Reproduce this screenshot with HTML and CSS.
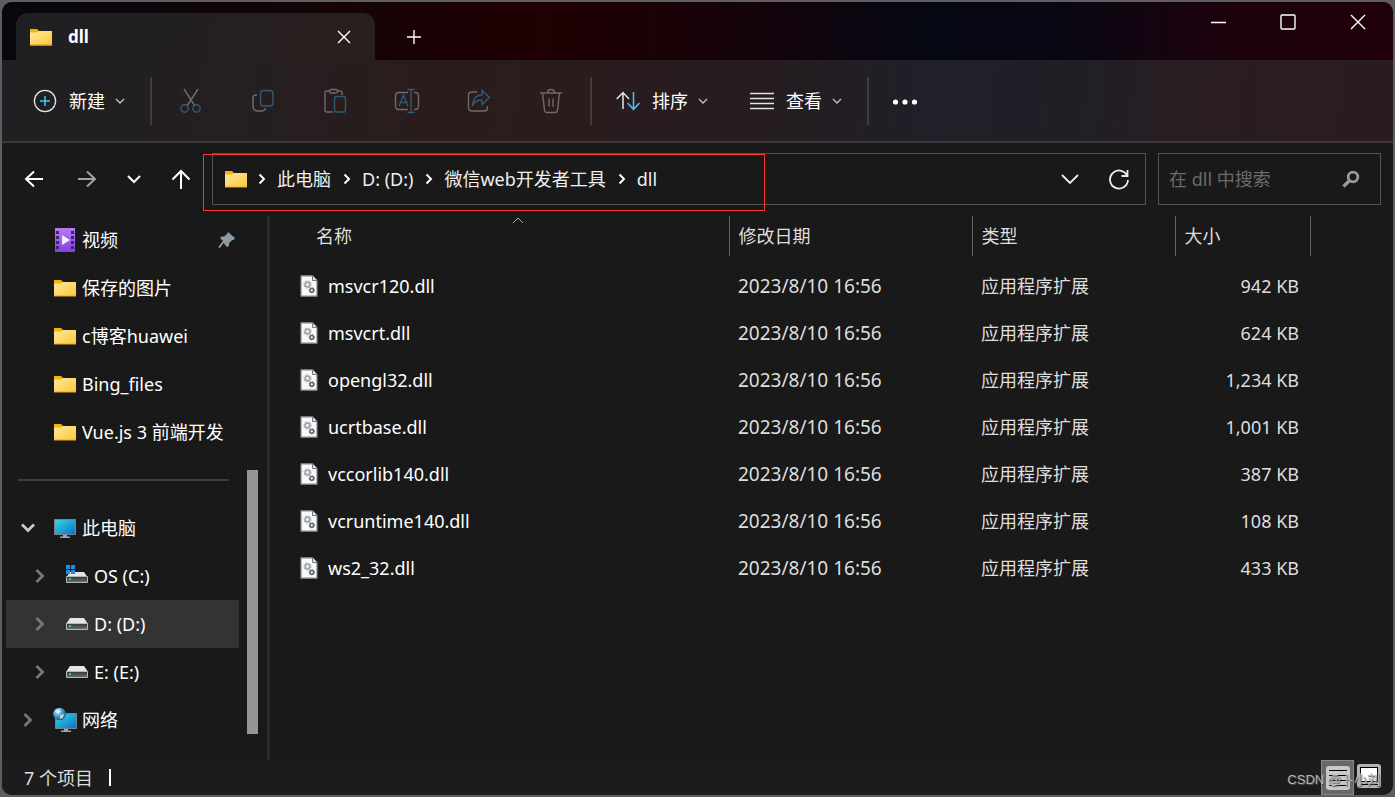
FILE: index.html
```html
<!DOCTYPE html>
<html lang="zh-CN">
<head>
<meta charset="utf-8">
<title>dll</title>
<link rel="stylesheet" href="styles.css">
</head>
<body>
<svg class="defs" aria-hidden="true">
  <defs>
    <linearGradient id="gFolder" x1="0" y1="0" x2="1" y2="1"><stop offset="0" stop-color="#ffe9a3"/><stop offset="1" stop-color="#fcc733"/></linearGradient>
    <linearGradient id="gScreen" x1="0" y1="0" x2="1" y2="1"><stop offset="0" stop-color="#35dbe2"/><stop offset="1" stop-color="#0b6fc4"/></linearGradient>
    <linearGradient id="gVideo" x1="0" y1="0" x2="0" y2="1"><stop offset="0" stop-color="#b97af5"/><stop offset="1" stop-color="#8440de"/></linearGradient>
    <linearGradient id="gDrive" x1="0" y1="0" x2="0" y2="1"><stop offset="0" stop-color="#333"/><stop offset="1" stop-color="#707070"/></linearGradient>
    <radialGradient id="gGlobe" cx=".35" cy=".3" r=".75"><stop offset="0" stop-color="#c9ecfb"/><stop offset=".5" stop-color="#4a9ccb"/><stop offset="1" stop-color="#17567f"/></radialGradient>
    <symbol id="folder" viewBox="0 0 24 18"><path d="M1 1h7l2 2v3H1z" fill="#f9b10c"/><path d="M1 4.500h7l2-1.500h13v14H1z" fill="url(#gFolder)"/><path d="M1 17h22" stroke="#e8aa26"/></symbol>
    <symbol id="chev-r" viewBox="0 0 8 12"><path d="M1.500 1.500 6 6l-4.500 4.500" fill="none" stroke="currentColor" stroke-width="2"/></symbol>
    <symbol id="chev-d" viewBox="0 0 10 6"><path d="M1 1l4 4 4-4" fill="none" stroke="currentColor" stroke-width="1.300"/></symbol>
    <symbol id="tree-r" viewBox="0 0 10 16"><path d="M1.500 2 7.500 8l-6 6" fill="none" stroke="currentColor" stroke-width="2.800"/></symbol>
    <symbol id="tree-d" viewBox="0 0 16 10"><path d="M2 1.500 8 7.500l6-6" fill="none" stroke="currentColor" stroke-width="2.800"/></symbol>
    <symbol id="drive" viewBox="0 0 24 14"><path d="M5 1h14l4 6H1z" fill="#e3e5e8"/><path d="M1.500 6.500h21v6h-21z" fill="url(#gDrive)" stroke="#b5b8bb"/><path d="M4 8h2v2H4z" fill="#29e04b"/></symbol>
    <symbol id="monitor" viewBox="0 0 24 20"><path d="M1.500 1.500h21v15h-21z" fill="url(#gScreen)" stroke="#76838c"/><path d="M10 17h4v1.500h3V20H7v-1.500h3z" fill="#9ba7af"/></symbol>
    <symbol id="file" viewBox="0 0 18 22"><path d="M1 .8h11.500L17 5.500V21.200H1z" fill="#f9f9f9" stroke="#858585" stroke-width="1.200"/><path d="M12.500 1v4.500H17" fill="#e4e4e4" stroke="#777"/><circle cx="7.500" cy="9.500" r="2.300" fill="none" stroke="#a0a9b2" stroke-width="1.800"/><circle cx="7.500" cy="9.500" r="3.500" fill="none" stroke="#a0a9b2" stroke-width="1.200" stroke-dasharray="1.370 1.370"/><circle cx="11.800" cy="15.300" r="1.900" fill="none" stroke="#59656d" stroke-width="1.500"/><circle cx="11.800" cy="15.300" r="2.700" fill="none" stroke="#59656d" stroke-width=".8" stroke-dasharray="1.060 1.060"/></symbol>
  </defs>
</svg>
<div class="window">
  <header class="titlebar">
    <div class="tab">
      <svg class="i-folder"><use href="#folder"/></svg>
      <span class="tab-title">dll</span>
      <button class="tab-close" aria-label="关闭标签页"><svg width="14" height="14" viewBox="0 0 14 14"><path d="M1 1l12 12M13 1 1 13"/></svg></button>
    </div>
    <button class="new-tab" aria-label="新建标签页"><svg width="16" height="16" viewBox="0 0 16 16"><path d="M8 1v14M1 8h14"/></svg></button>
    <div class="controls">
      <button aria-label="最小化"><svg width="16" height="16" viewBox="0 0 16 16"><path d="M1 8.500h15"/></svg></button>
      <button aria-label="最大化"><svg width="16" height="16" viewBox="0 0 16 16"><rect x="1" y="1" width="14" height="14" rx="1"/></svg></button>
      <button aria-label="关闭"><svg width="16" height="16" viewBox="0 0 16 16"><path d="M1 1l14 14M15 1 1 15"/></svg></button>
    </div>
  </header>
  <div class="toolbar">
    <button class="menu new"><svg width="24" height="24" viewBox="0 0 24 24"><circle cx="12" cy="12" r="10.600" stroke="#e4e4e4" stroke-width="1.300"/><path d="M12 7v10M7 12h10" stroke="#4cc2ff" stroke-width="1.500"/></svg><span>新建</span><svg class="i-chev"><use href="#chev-d"/></svg></button>
    <div class="rule"></div>
    <div class="actions">
      <button disabled aria-label="剪切"><svg width="24" height="26" viewBox="0 0 24 26"><path d="M5 1l11 17M19 1 8 18" stroke="#73696a"/><circle cx="5.500" cy="20.500" r="3.700" stroke="#315c77"/><circle cx="17.500" cy="20.500" r="3.700" stroke="#315c77"/></svg></button>
      <button disabled aria-label="复制"><svg width="24" height="26" viewBox="0 0 24 26"><path d="M6 7H5q-3 0-3 3v8q0 5 5 5h4q3 0 3.500-3" stroke="#73696a"/><rect x="9.500" y="2.500" width="12.500" height="15.500" rx="3" stroke="#315c77"/></svg></button>
      <button disabled aria-label="粘贴"><svg width="24" height="26" viewBox="0 0 24 26"><path d="M6.500 3H4Q2 3 2 5v17q0 2 2 2h6M15 3h2q2 0 2 2v2" stroke="#73696a"/><rect x="6.500" y="1.500" width="8" height="3.500" rx="1.700" stroke="#73696a"/><rect x="11.500" y="8.500" width="11" height="15.500" rx="1.500" stroke="#315c77"/></svg></button>
      <button disabled aria-label="重命名"><svg width="26" height="26" viewBox="0 0 26 26"><path d="M14 4.500H5Q1.500 4.500 1.500 8v10q0 3.500 3.500 3.500h9M20 4.500h1q3.500 0 3.500 3.500v10q0 3.500-3.500 3.500h-1" stroke="#73696a"/><path d="M17 2v22M13.500 1.500h7M13.500 24.500h7M5 18l4.500-11L14 18M6.500 14.500h6" stroke="#315c77"/></svg></button>
      <button disabled aria-label="共享"><svg width="26" height="26" viewBox="0 0 26 26"><path d="M11 4H6Q2.500 4 2.500 7.500v12Q2.500 23 6 23h12q3.500 0 3.500-3.500V18" stroke="#73696a"/><path d="M16 2.500l7.500 7-7.500 7v-4.500q-6-.5-9.500 5Q7 7.500 16 7z" stroke="#315c77"/></svg></button>
      <button disabled aria-label="删除"><svg width="24" height="26" viewBox="0 0 24 26"><path d="M1 5h22M8.500 5q0-3.500 3.500-3.500T15.500 5M3.500 5l2 17q.3 2.500 2.500 2.500h8q2.200 0 2.500-2.500l2-17M10 10.500v8M14 10.500v8" stroke="#73696a"/></svg></button>
    </div>
    <div class="rule"></div>
    <button class="menu sort"><svg width="24" height="20" viewBox="0 0 24 20"><path d="M7 18V1.500M.7 8 7 1.500 13 8" stroke="#e4e4e4" stroke-width="1.500"/><path d="M17.500 1v17M11.500 12l6 6.300 6-6.300" stroke="#4cc2ff" stroke-width="1.500"/></svg><span>排序</span><svg class="i-chev"><use href="#chev-d"/></svg></button>
    <button class="menu view"><svg width="24" height="18" viewBox="0 0 24 18"><path d="M0 1.500h24M0 6.500h24M0 11.500h24M0 16.500h24" stroke="#e4e4e4" stroke-width="1.400"/></svg><span>查看</span><svg class="i-chev"><use href="#chev-d"/></svg></button>
    <div class="rule"></div>
    <button class="more" aria-label="更多"><svg width="26" height="8" viewBox="0 0 26 8"><g fill="#fff"><circle cx="3.500" cy="5" r="2.600"/><circle cx="13" cy="5" r="2.600"/><circle cx="22.500" cy="5" r="2.600"/></g></svg></button>
  </div>
  <div class="locationbar">
    <nav class="history">
      <button aria-label="后退"><svg width="20" height="20" viewBox="0 0 20 20"><path d="M19 10H2M10 2.500 2 10l8 7.500"/></svg></button>
      <button class="dim" aria-label="前进"><svg width="20" height="20" viewBox="0 0 20 20"><path d="M1 10h17M10 2.500l8 7.500-8 7.500"/></svg></button>
      <button class="recent" aria-label="最近的位置"><svg width="14" height="10" viewBox="0 0 14 10"><path d="M1 2l6 6 6-6"/></svg></button>
      <button aria-label="向上"><svg width="20" height="22" viewBox="0 0 20 22"><path d="M10 21V3M1.500 11.500 10 3l8.500 8.500"/></svg></button>
    </nav>
    <div class="address">
      <svg class="i-folder"><use href="#folder"/></svg>
      <svg class="i-sep"><use href="#chev-r"/></svg><a href="#">此电脑</a>
      <svg class="i-sep"><use href="#chev-r"/></svg><a href="#">D: (D:)</a>
      <svg class="i-sep"><use href="#chev-r"/></svg><a href="#">微信web开发者工具</a>
      <svg class="i-sep"><use href="#chev-r"/></svg><a href="#">dll</a>
      <div class="address-tools">
        <button aria-label="以前的位置"><svg width="18" height="12" viewBox="0 0 18 12"><path d="M1 2l8 8 8-8"/></svg></button>
        <button aria-label="刷新"><svg width="22" height="22" viewBox="0 0 22 22"><path d="M19.500 8.500A9 9 0 1 0 20 12M19.500 2v6h-6"/></svg></button>
      </div>
      <div class="highlight"></div>
    </div>
    <label class="search"><input type="text" placeholder="在 dll 中搜索" aria-label="在 dll 中搜索"><svg width="18" height="18" viewBox="0 0 18 18"><circle cx="11" cy="7" r="4.800" stroke-width="2.800"/><path d="M7.500 10.500 1.500 16.500" stroke-width="3.200"/></svg></label>
  </div>
  <main class="body">
    <nav class="tree">
      <ul>
        <li><svg class="i-node" viewBox="0 0 24 26"><path d="M2 1h20v24H2z" fill="url(#gVideo)"/><path d="M3 4h3v3H3zM3 9h3v3H3zM3 14h3v3H3zM3 19h3v3H3zM18 4h3v3h-3zM18 9h3v3h-3zM18 14h3v3h-3zM18 19h3v3h-3z" fill="#40256b"/><path d="M9 8l8 5-8 5z" fill="#f4eeff"/></svg><a href="#">视频</a><svg class="pin" width="18" height="18" viewBox="0 0 18 18"><path d="M10 1l7 6-1.500 2-1.500.2-3 3V15l-2 1-3.500-4L2 17l-1.500-.5L1 15l4-5-3-3 1.500-1.500H6L9 3z" fill="#8e9aa3"/></svg></li>
        <li><svg class="i-folder"><use href="#folder"/></svg><a href="#">保存的图片</a></li>
        <li><svg class="i-folder"><use href="#folder"/></svg><a href="#">c博客huawei</a></li>
        <li><svg class="i-folder"><use href="#folder"/></svg><a href="#">Bing_files</a></li>
        <li><svg class="i-folder"><use href="#folder"/></svg><a href="#">Vue.js 3 前端开发</a></li>
        <li class="divider" role="separator"></li>
        <li class="root"><svg class="i-tree open"><use href="#tree-d"/></svg><svg class="i-monitor"><use href="#monitor"/></svg><a href="#">此电脑</a></li>
        <li class="child"><svg class="i-tree"><use href="#tree-r"/></svg><svg class="i-os" viewBox="0 0 24 24"><path d="M5 8h14l4 6H1z" fill="#e3e5e8"/><path d="M1.500 12.500h21v6h-21z" fill="url(#gDrive)" stroke="#b5b8bb"/><path d="M4 14h2v2H4z" fill="#29e04b"/><path d="M1 1h4v4H1zM6 1h4v4H6zM1 6h4v4H1zM6 6h4v4H6z" fill="#1790e8"/></svg><a href="#">OS (C:)</a></li>
        <li class="child selected"><svg class="i-tree"><use href="#tree-r"/></svg><svg class="i-drive"><use href="#drive"/></svg><a href="#">D: (D:)</a></li>
        <li class="child"><svg class="i-tree"><use href="#tree-r"/></svg><svg class="i-drive"><use href="#drive"/></svg><a href="#">E: (E:)</a></li>
        <li class="root"><svg class="i-tree"><use href="#tree-r"/></svg><svg class="i-node" viewBox="0 0 24 26"><path d="M2.500 6.500h21v15h-21z" fill="url(#gScreen)" stroke="#76838c"/><path d="M11 22h4v1.500h3V25H8v-1.500h3z" fill="#9ba7af"/><circle cx="6.500" cy="7" r="6.300" fill="url(#gGlobe)"/><path d="M2 4l4-2 2 2-3 3zM7 8l4-1-1 4-3 1z" fill="#e1f3fa" opacity=".7"/></svg><a href="#">网络</a></li>
      </ul>
      <div class="scroll"><div class="thumb"></div></div>
    </nav>
    <section class="files">
      <table>
        <colgroup><col class="c-name"><col class="c-date"><col class="c-type"><col class="c-size"><col></colgroup>
        <thead><tr><th class="name">名称<svg class="sorted" width="12" height="7" viewBox="0 0 12 7"><path d="M1 6l5-5 5 5"/></svg></th><th>修改日期</th><th>类型</th><th>大小</th><th></th></tr></thead>
        <tbody>
          <tr><td><div class="file"><svg><use href="#file"/></svg>msvcr120.dll</div></td><td class="date">2023/8/10 16:56</td><td>应用程序扩展</td><td class="size">942 KB</td><td></td></tr>
          <tr><td><div class="file"><svg><use href="#file"/></svg>msvcrt.dll</div></td><td class="date">2023/8/10 16:56</td><td>应用程序扩展</td><td class="size">624 KB</td><td></td></tr>
          <tr><td><div class="file"><svg><use href="#file"/></svg>opengl32.dll</div></td><td class="date">2023/8/10 16:56</td><td>应用程序扩展</td><td class="size">1,234 KB</td><td></td></tr>
          <tr><td><div class="file"><svg><use href="#file"/></svg>ucrtbase.dll</div></td><td class="date">2023/8/10 16:56</td><td>应用程序扩展</td><td class="size">1,001 KB</td><td></td></tr>
          <tr><td><div class="file"><svg><use href="#file"/></svg>vccorlib140.dll</div></td><td class="date">2023/8/10 16:56</td><td>应用程序扩展</td><td class="size">387 KB</td><td></td></tr>
          <tr><td><div class="file"><svg><use href="#file"/></svg>vcruntime140.dll</div></td><td class="date">2023/8/10 16:56</td><td>应用程序扩展</td><td class="size">108 KB</td><td></td></tr>
          <tr><td><div class="file"><svg><use href="#file"/></svg>ws2_32.dll</div></td><td class="date">2023/8/10 16:56</td><td>应用程序扩展</td><td class="size">433 KB</td><td></td></tr>
        </tbody>
      </table>
    </section>
  </main>
  <footer class="status">
    <span class="count">7 个项目</span><i class="bar"></i>
    <div class="modes">
      <button class="on" aria-label="详细信息"><svg width="24" height="24" viewBox="0 0 24 24"><rect width="24" height="24" rx="3" fill="#c8c8c8"/><path d="M3 4.500h18M3 9.500h18M3 14.500h18M3 19.500h18" stroke="#000"/></svg></button>
      <button class="large" aria-label="大图标"><svg width="24" height="24" viewBox="0 0 24 24"><rect width="24" height="24" rx="3" fill="#b5b5b5"/><rect x="3.500" y="3.500" width="17" height="14" fill="#fff" stroke="#000"/><path d="M3 20.500h18" stroke="#000"/></svg></button>
    </div>
    <span class="watermark">CSDN @卜小刘</span>
  </footer>
</div>
</body>
</html>
```
FILE: styles.css
```css
* { box-sizing: border-box; }

html, body { height: 100%; }

body {
  margin: 0;
  padding: 2px;
  background: #5e5e5e;
  color: #fff;
  font: 18px/24px "Noto Sans", "Noto Sans CJK SC", sans-serif;
}

button {
  display: flex;
  align-items: center;
  justify-content: center;
  padding: 0;
  border: 0;
  background: none;
  color: inherit;
  font: inherit;
}

a { color: inherit; text-decoration: none; }
svg { display: block; flex: none; fill: none; }

.defs { position: absolute; width: 0; height: 0; }
.i-folder { width: 24px; height: 18px; }
.i-chev { width: 10px; height: 6px; color: #c4c4c4; }
.i-sep { width: 8px; height: 12px; }
.i-node { width: 24px; height: 26px; }
.i-monitor { width: 24px; height: 20px; }
.i-os { width: 24px; height: 24px; }
.i-drive { width: 24px; height: 14px; }

.window {
  display: flex;
  flex-direction: column;
  height: 100%;
  overflow: hidden;
  border-radius: 10px;
  background: #191919;
}

/* Title bar */
.titlebar {
  display: flex;
  align-items: flex-end;
  height: 58px;
  padding-left: 14px;
  background: linear-gradient(90deg, #08070f, #150406 25%, #200003 38%, #1b0205 46%, #10040e 58%, #050813 67%, #0a0713 77%, #1c020d 88%, #20000a);
}

.tab {
  display: flex;
  align-items: center;
  width: 359px;
  height: 47px;
  padding: 0 24px 0 13px;
  border-radius: 12px 12px 0 0;
  background: linear-gradient(100deg, #201f23, #231f20 50%, #2a1e1e);
}

.tab-title { margin-left: 15px; font-weight: 700; font-size: 17px; }
.tab-close { width: 14px; height: 24px; margin-left: auto; }
.new-tab { width: 78px; height: 47px; }
.titlebar svg { stroke: #fff; stroke-width: 1.4; }
.titlebar .i-folder { stroke: none; }

.controls { display: flex; align-self: flex-start; margin-left: auto; }
.controls button { width: 70px; height: 40px; }

/* Command bar */
.toolbar {
  display: flex;
  align-items: center;
  height: 83px;
  border-bottom: 2px solid #3b393a;
  background: linear-gradient(95deg, #201f23, #241f20 16%, #2b1c1c 32%, #2a1c1e 44%, #251d21 56%, #1f2029 67%, #211f26 77%, #291d22 86%, #2b1b20);
}

.rule { width: 2px; height: 48px; background: #413c3e; }
.menu span { margin: 0 10px 0 12px; }
.menu.new { margin: 0 25px 0 31px; }
.actions { display: flex; padding: 0 3px; }
.actions button { width: 72px; height: 48px; }
.actions svg { stroke-width: 1.4; }
.menu.sort { margin-left: 24px; }
.menu.view { margin: 0 25px 0 42px; }
.more { margin-left: 23px; }

/* Navigation and address */
.locationbar {
  display: flex;
  align-items: center;
  height: 73px;
  padding: 0 12px 2px 22px;
}

.history { display: flex; align-items: center; gap: 33px; margin-right: 21px; }
.history svg { stroke: #fff; stroke-width: 2; }
.history .recent { margin: 0 -3px; }
.history .dim { opacity: 0.6; }

.address {
  position: relative;
  display: flex;
  align-items: center;
  flex: 1;
  height: 52px;
  padding: 0 15px 0 11px;
  border: 1px solid #535353;
}

.address svg { stroke: none; }
.address a { margin-left: 11px; color: #f0f0f0; }
.address .i-sep { margin-left: 10px; }
.address a + .i-sep { margin-left: 12px; }
.address-tools { display: flex; gap: 29px; margin-left: auto; }
.address-tools svg { stroke: #f0f0f0; stroke-width: 1.8; }

.highlight {
  position: absolute;
  top: 0;
  left: -10px;
  width: 562px;
  height: 57px;
  border: 1px solid #f33;
}

.search {
  display: flex;
  align-items: center;
  width: 223px;
  height: 52px;
  margin-left: 12px;
  padding: 0 20px 0 10px;
  border: 1px solid #535353;
}

.search input {
  flex: 1;
  min-width: 0;
  padding: 0;
  border: 0;
  outline: 0;
  background: none;
  color: #fff;
  font: inherit;
}

.search input::placeholder { color: #6b6b6b; opacity: 1; }
.search svg { stroke: #999; }

/* Folder tree */
.body { display: flex; flex: 1; min-height: 0; }

.tree {
  display: flex;
  justify-content: space-between;
  width: 268px;
  border-right: 3px solid #2b2b2b;
}

.tree ul { width: 237px; margin: 0; padding: 0 0 0 4px; list-style: none; }

.tree li {
  display: flex;
  align-items: center;
  height: 48px;
  padding-left: 47px;
  white-space: nowrap;
}

.tree a { margin-left: 5px; }
.tree .pin { margin: 0 3px 0 auto; }
.tree .root { padding-left: 14px; }
.tree .child { padding-left: 26px; }
.tree .selected { background: #333; }

.tree .divider { padding: 0 10px 0 12px; }
.divider::before { content: ""; flex: 1; height: 2px; background: #3b3b3b; }

.i-tree { width: 10px; height: 16px; margin: 0 20px 0 3px; color: #777; }
.i-tree.open { width: 16px; height: 10px; margin: 0 17px 0 0; color: #c8c8c8; }

.scroll { display: flex; align-items: flex-end; padding: 0 9px 26px 0; }
.thumb { width: 11px; height: 264px; background: #959595; }

/* File list */
.files { flex: 1; min-width: 0; }
.files table { width: 100%; border-collapse: collapse; table-layout: fixed; }
.c-name { width: 459px; }
.c-date { width: 243px; }
.c-type { width: 203px; }
.c-size { width: 135px; }

.files th {
  height: 40px;
  padding: 0 9px;
  border-right: 1px solid #636363;
  color: #dedede;
  font-weight: 400;
  text-align: left;
}

.files th:last-child { border: 0; }
.files .name { position: relative; padding-left: 46px; }
.sorted { position: absolute; top: 1px; left: 242px; stroke: #aaa; }
.files tbody::before { content: ""; display: block; height: 6px; }
.files td { height: 47px; padding: 0 9px; color: #dedede; white-space: nowrap; }
.files .date { font-size: 19px; }
.files .size { padding-right: 11px; text-align: right; }
.file { display: flex; align-items: center; gap: 10px; padding-left: 21px; color: #fff; }
.file svg { width: 18px; height: 22px; }

/* Status bar */
.status {
  position: relative;
  display: flex;
  align-items: center;
  height: 35px;
  padding: 0 9px 0 22px;
  background: #1c1c1c;
}

.count { color: #dedede; }
.bar { width: 2px; height: 17px; margin-left: 16px; background: #fff; }
.modes { display: flex; align-self: stretch; margin-left: auto; }
.modes button { width: 30px; }
.modes .on { width: 33px; border: 1px solid #888; background: #686868; }
.modes .large { padding-bottom: 4px; }

.watermark {
  position: absolute;
  right: 13px;
  bottom: 3px;
  color: #b4b4b4;
  font: 13px/24px "Liberation Sans", "Noto Sans CJK SC", sans-serif;
  text-shadow: 1px 1px 1px #555;
}
```
